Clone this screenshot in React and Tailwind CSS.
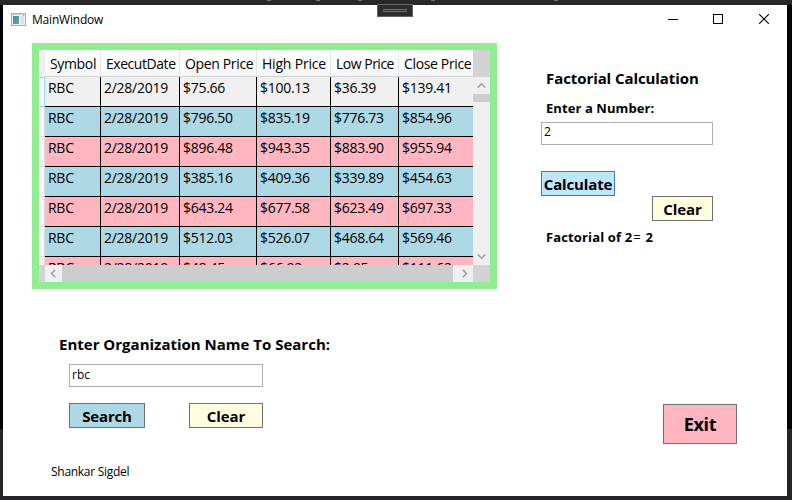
import React from 'react';

const columns = [
  { title: 'Symbol', width: 'w-[56px]', head: 'tracking-[-0.35px]' },
  { title: 'ExecutDate', width: 'w-[79px]', head: 'tracking-[-0.45px]' },
  { title: 'Open Price', width: 'w-[77px]', head: 'tracking-[-0.35px]' },
  { title: 'High Price', width: 'w-[74px]', head: 'tracking-[-0.2px]' },
  { title: 'Low Price', width: 'w-[68px]', head: 'tracking-[-0.5px]' },
  { title: 'Close Price', width: 'w-[74px]', head: 'tracking-[-0.35px]' },
];

const rows = [
  ['RBC', '2/28/2019', '$75.66', '$100.13', '$36.39', '$139.41'],
  ['RBC', '2/28/2019', '$796.50', '$835.19', '$776.73', '$854.96'],
  ['RBC', '2/28/2019', '$896.48', '$943.35', '$883.90', '$955.94'],
  ['RBC', '2/28/2019', '$385.16', '$409.36', '$339.89', '$454.63'],
  ['RBC', '2/28/2019', '$643.24', '$677.58', '$623.49', '$697.33'],
  ['RBC', '2/28/2019', '$512.03', '$526.07', '$468.64', '$569.46'],
  ['RBC', '2/28/2019', '$48.45', '$66.92', '$2.95', '$111.62'],
];

function rowColor(i) {
  if (i === 0) return 'bg-[#f0f0f0]';
  return i % 2 ? 'bg-[#add8e6]' : 'bg-[#ffb6c1]';
}

function Chevron({ d }) {
  return (
    <svg width="9" height="9" viewBox="0 0 9 9" fill="none" stroke="#a0a0a0" strokeWidth="1.6">
      <path d={d} />
    </svg>
  );
}

function TitleBar() {
  return (
    <header className="flex h-[28px] shrink-0 items-center pl-[8px]">
      <svg width="15" height="13" viewBox="0 0 15 13">
        <defs>
          <linearGradient id="pane" x1="0" y1="0" x2="1" y2="1">
            <stop offset="0" stopColor="#4a7fb5" />
            <stop offset="1" stopColor="#5fb58a" />
          </linearGradient>
        </defs>
        <rect x="0.5" y="0.5" width="14" height="12" fill="#f2f2f2" stroke="#a9adb3" />
        <rect x="1" y="1" width="13" height="1" fill="#d0d4da" />
        <rect x="2" y="3" width="6" height="8" fill="url(#pane)" />
        <rect x="9" y="3" width="4" height="8" fill="#dfe2e5" />
        <rect x="12" y="2" width="1" height="1" fill="#6aa786" />
      </svg>
      <span className="ml-[6px] mt-[2px] text-[12px] leading-[16px] tracking-[-0.2px]">MainWindow</span>
      <div className="ml-auto flex h-full">
        <div className="flex w-[46px] items-center justify-center pl-[2px]">
          <div className="h-px w-[10px] bg-black" />
        </div>
        <div className="flex w-[46px] items-center justify-center">
          <div className="size-[10px] border border-black" />
        </div>
        <div className="flex w-[46px] items-center justify-center">
          <svg width="10" height="10" viewBox="0 0 10 10" stroke="#000" strokeWidth="1.1">
            <path d="M0 0 10 10M10 0 0 10" />
          </svg>
        </div>
      </div>
    </header>
  );
}

function DataGrid() {
  return (
    <div className="ml-[29px] mt-[10px] h-[246px] w-[465px] border-[7px] border-[#90ee90] bg-[#f0f0f0]">
      <div className="flex h-[215px]">
        <div className="w-[434px] overflow-hidden">
          <div className="flex h-[27px]">
            <div className="w-[6px] bg-[#f0f0f0]" />
            {columns.map((c, i) => (
              <div
                key={c.title}
                className={`${c.width} ${i < 5 ? 'border-r border-r-[#e6e6e8]' : ''} shrink-0 overflow-hidden whitespace-nowrap border-b border-b-[#d0d2d4] bg-linear-to-b from-white from-40% to-[#f3f4f6] pl-[5px] pt-[4px] text-[14px] leading-[20px] ${c.head}`}
              >
                {c.title}
              </div>
            ))}
          </div>
          {rows.map((r, i) => (
            <div key={i} className="flex h-[30px]">
              <div
                className={`w-[6px] shrink-0 border-r ${i === 0 ? 'border-y border-[#99d9f7] bg-[#f6fbfe]' : 'border-b border-[#dcdcde] bg-linear-to-r from-white to-[#f4f4f6]'}`}
              />
              {r.map((v, j) => (
                <div
                  key={j}
                  className={`${columns[j].width} ${rowColor(i)} ${j < 5 ? 'border-r' : ''} shrink-0 whitespace-nowrap border-b border-black pl-[3px] pt-px text-[14px] leading-[20px] tracking-[-0.27px]`}
                >
                  {v}
                </div>
              ))}
            </div>
          ))}
        </div>
        <div className="flex w-[17px] flex-col">
          <div className="h-[27px] bg-[#d3d3d3]" />
          <div className="flex h-[17px] items-center justify-center">
            <Chevron d="M0.8 6.5 4.5 2.8 8.2 6.5" />
          </div>
          <div className="h-[8px] bg-[#cdcdcd]" />
          <div className="flex-1" />
          <div className="flex h-[17px] items-center justify-center">
            <Chevron d="M0.8 2.5 4.5 6.2 8.2 2.5" />
          </div>
        </div>
      </div>
      <div className="flex h-[17px]">
        <div className="w-[6px] bg-[#d3d3d3]" />
        <div className="flex w-[17px] items-center justify-center">
          <Chevron d="M6.2 0.8 2.5 4.5 6.2 8.2" />
        </div>
        <div className="flex-1 bg-[#cdcdcd]" />
        <div className="flex w-[20px] items-center justify-center pl-[3px]">
          <Chevron d="M2.8 0.8 6.5 4.5 2.8 8.2" />
        </div>
        <div className="w-[17px] bg-[#d3d3d3]" />
      </div>
    </div>
  );
}

function Button({ className, children }) {
  return (
    <button
      type="button"
      className={`flex items-center justify-center whitespace-nowrap border font-bold ${className}`}
    >
      {children}
    </button>
  );
}

export default function App() {
  return (
    <div className="relative h-[500px] w-[792px] overflow-hidden bg-linear-to-b from-[#050506] from-[429px] to-[#252527] to-[429px] font-['Open_Sans','Noto_Sans',sans-serif] text-black">
      <div className="flex h-[5px] items-start bg-[#282828] pl-[267px]">
        <div className="h-px w-[4px] bg-[#77736c]" />
        <div className="ml-[45px] h-px w-[4px] bg-[#77736c]" />
        <div className="ml-[38px] h-px w-[4px] bg-[#77736c]" />
        <div className="ml-[69px] h-px w-[4px] bg-[#77736c]" />
        <div className="ml-[119px] h-px w-[4px] bg-[#77736c]" />
      </div>
      <div className="ml-[3px] flex h-[491px] w-[784px] flex-col bg-white">
        <TitleBar />
        <main className="flex flex-1">
          <section className="w-[538px]">
            <DataGrid />
            <h2 className="ml-[56px] mt-[45px] whitespace-nowrap text-[15px] font-bold leading-[20px]">
              Enter Organization Name To Search:
            </h2>
            <div className="ml-[66px] mt-[10px] h-[23px] w-[194px] border border-[#abadb3] pl-[2px] text-[12px] leading-[19px]">
              rbc
            </div>
            <div className="ml-[66px] mt-[16px] flex gap-[44px]">
              <Button className="h-[25px] w-[76px] border-[#707070] bg-[#add8e6] pt-px text-[15px] tracking-[-0.2px]">Search</Button>
              <Button className="h-[25px] w-[74px] border-[#707070] bg-[#ffffe0] pt-px text-[15px] tracking-[-0.1px]">Clear</Button>
            </div>
            <p className="ml-[48px] mt-[36px] text-[12px] leading-[16px] tracking-[-0.28px]">Shankar Sigdel</p>
          </section>
          <section className="flex w-[246px] flex-col">
            <h2 className="ml-[5px] mt-[35px] whitespace-nowrap text-[15px] font-bold leading-[20px] tracking-[-0.08px]">
              Factorial Calculation
            </h2>
            <h3 className="ml-[5px] mt-[11px] whitespace-nowrap text-[13px] font-bold leading-[18px] tracking-[0.08px]">
              Enter a Number:
            </h3>
            <div className="mt-[5px] h-[23px] w-[172px] border border-[#abadb3] pl-[2px] text-[12px] leading-[18px]">2</div>
            <Button className="mt-[26px] h-[25px] w-[74px] border-[#3c7fb1] bg-[#bee6fd] pt-px text-[15px] tracking-[-0.15px]">Calculate</Button>
            <Button className="ml-[111px] h-[25px] w-[61px] border-[#707070] bg-[#ffffe0] pt-px text-[15px] tracking-[-0.1px]">Clear</Button>
            <p className="ml-[5px] mt-[7px] whitespace-nowrap text-[13px] font-bold leading-[18px] tracking-[0.14px]">
              Factorial of 2<span className="ml-px mr-px font-normal">=</span> 2
            </p>
            <Button className="ml-[122px] mt-[158px] h-[40px] w-[74px] border-[#707070] bg-[#ffb6c1] text-[18px] tracking-[-0.3px]">Exit</Button>
          </section>
        </main>
      </div>
      <div className="absolute left-[377px] top-[4px] flex h-[13px] w-[36px] flex-col items-center justify-center gap-px border border-[#646464] bg-[#2d2d30]">
        <div className="h-px w-[24px] bg-[#717174]" />
        <div className="h-px w-[24px] bg-[#717174]" />
      </div>
    </div>
  );
}
